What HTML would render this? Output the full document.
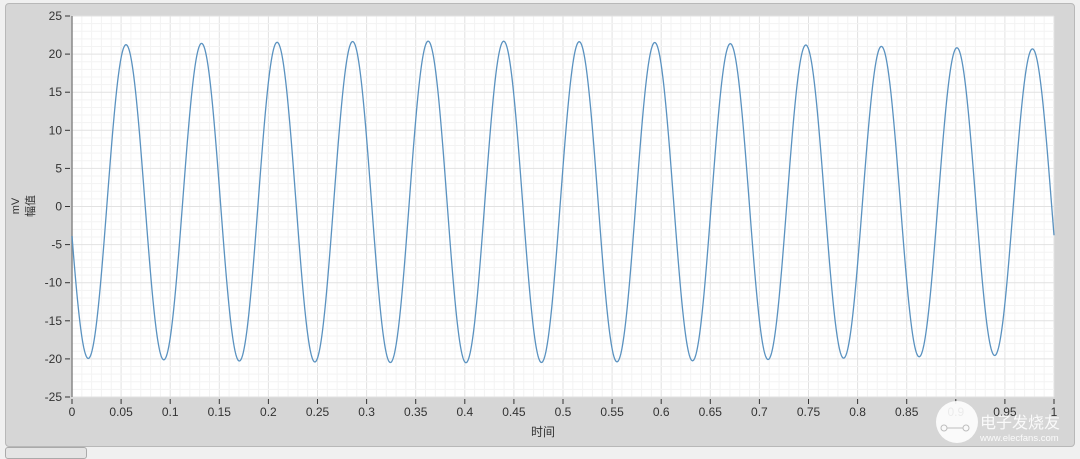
<!DOCTYPE html>
<html><head><meta charset="utf-8"><style>
body{margin:0;width:1080px;height:452px;background:#f0f0f0;overflow:hidden;font-family:"Liberation Sans","Noto Sans CJK SC",sans-serif;}
.panel{position:absolute;left:5px;top:3px;width:1068px;height:442px;background:#d6d6d6;border:1px solid #b8b8b8;border-radius:4px;}
.tab{position:absolute;left:5px;top:447px;width:80px;height:10px;border:1px solid #aaa;border-radius:3px;background:#e4e4e4;}
</style></head><body>
<div class="panel"></div>
<div class="tab"></div>
<svg id="s" width="1080" height="452" style="position:absolute;left:0;top:0" font-family="Liberation Sans, Noto Sans CJK SC, sans-serif"></svg>
<script>
var s=document.getElementById('s'),h='';
var X0=72,X1=1054,Y0=16,Y1=397;
function fx(t){return X0+t*(X1-X0);}function fy(v){return Y0+(25-v)/50*(Y1-Y0);}
h+='<rect x="'+X0+'" y="'+Y0+'" width="'+(X1-X0)+'" height="'+(Y1-Y0)+'" fill="#fff"/>';
for(var i=0;i<=100;i++){var x=fx(i/100);h+='<line x1="'+x+'" y1="'+Y0+'" x2="'+x+'" y2="'+Y1+'" stroke="'+(i%5?'#f3f3f3':'#e2e2e2')+'"/>';}
for(var j=0;j<=50;j++){var y=fy(25-j);h+='<line x1="'+X0+'" y1="'+y+'" x2="'+X1+'" y2="'+y+'" stroke="'+(j%5?'#f3f3f3':'#e2e2e2')+'"/>';}
h+='<line x1="'+X0+'" y1="'+Y0+'" x2="'+X0+'" y2="'+Y1+'" stroke="#888" stroke-width="1.5"/>';
for(var v=-25;v<=25;v+=5){var y=fy(v);h+='<line x1="65" y1="'+y+'" x2="70" y2="'+y+'" stroke="#333"/><text x="62" y="'+(y+4)+'" font-size="12" text-anchor="end" fill="#333">'+v+'</text>';}
for(var k=0;k<=20;k++){var x=fx(k*0.05);h+='<line x1="'+x+'" y1="399" x2="'+x+'" y2="404" stroke="#333"/><text x="'+x+'" y="416" font-size="12" text-anchor="middle" fill="#333">'+(k==0?'0':k==20?'1':(+(k*0.05).toFixed(2)).toString())+'</text>';}
h+='<text x="543" y="436" font-size="12" text-anchor="middle" fill="#333">时间</text>';
h+='<text transform="translate(19,206) rotate(-90)" font-size="11" text-anchor="middle" fill="#333">mV</text>';
h+='<text transform="translate(34,206) rotate(-90)" font-size="11" text-anchor="middle" fill="#333">幅值</text>';
var d='';for(var n=0;n<=2000;n++){var t=n/2000;var A=20.5+0.6*Math.sin(t*4);var val=A*Math.cos(2*Math.PI*13.0*(t-0.055))+0.6;d+=(n?'L':'M')+fx(t).toFixed(2)+' '+fy(val).toFixed(2);}
h+='<path d="'+d+'" fill="none" stroke="#5a92c0" stroke-width="1.3"/>';
h+='<g opacity="0.9"><circle cx="957" cy="422" r="21" fill="#fff"/><circle cx="944" cy="428" r="3" fill="none" stroke="#bbb"/><circle cx="966" cy="428" r="3" fill="none" stroke="#bbb"/><line x1="947" y1="428" x2="963" y2="428" stroke="#bbb"/><text x="980" y="428" font-size="16" fill="#fff">电子发烧友</text><text x="980" y="441" font-size="9.5" fill="#fff">www.elecfans.com</text></g>';
s.innerHTML=h;
</script>
</body></html>
